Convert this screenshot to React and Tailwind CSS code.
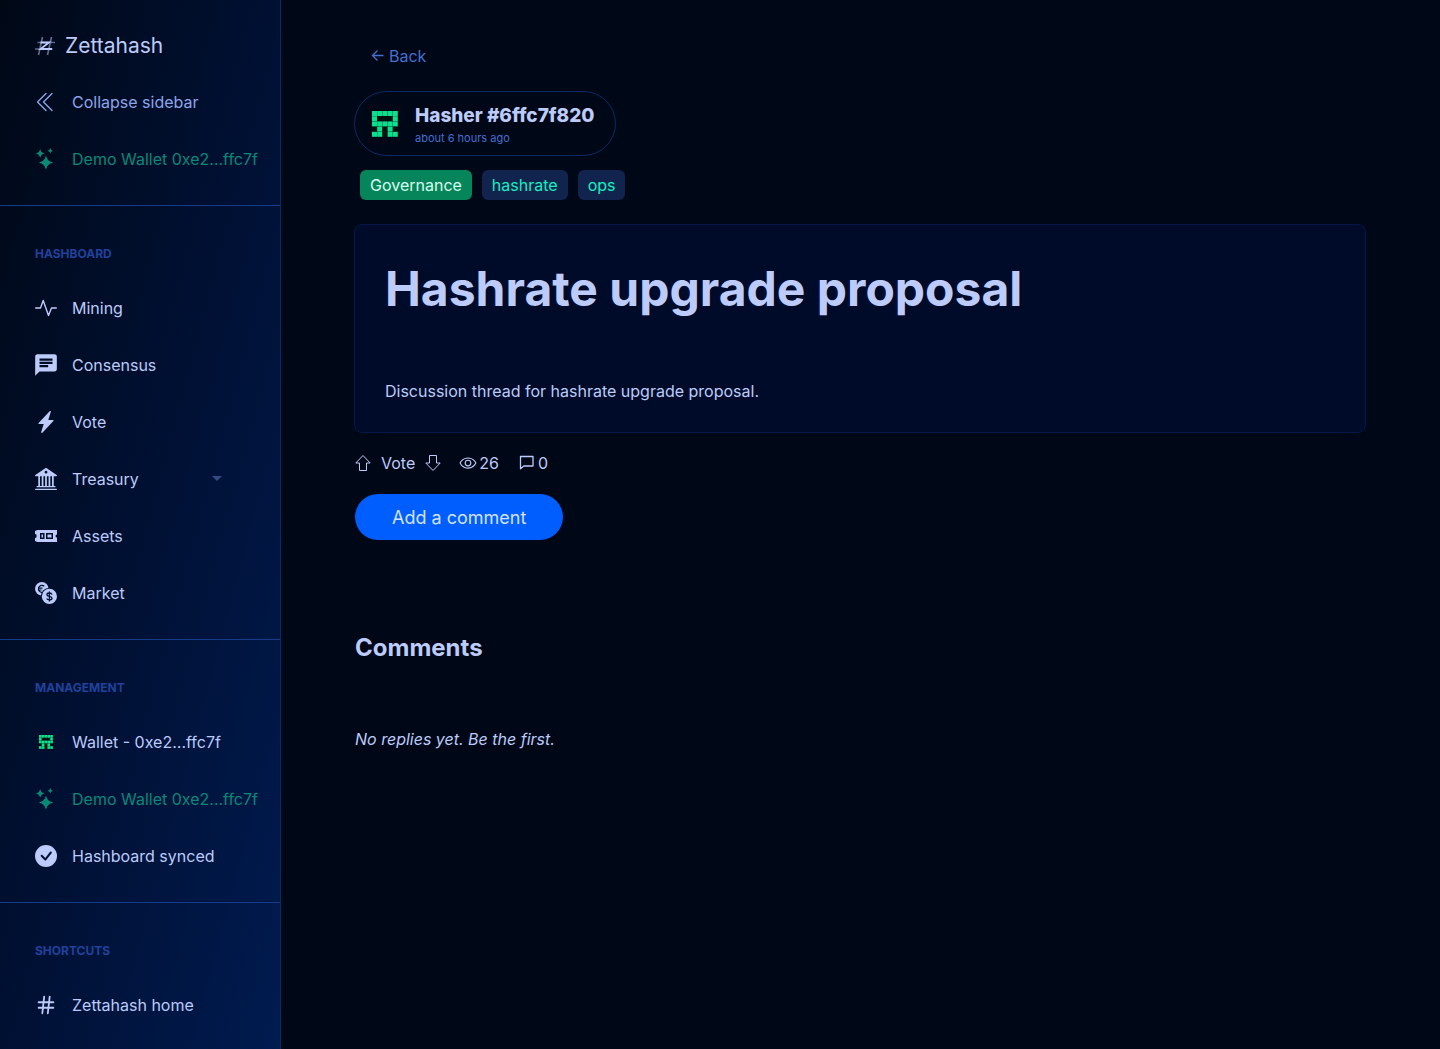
import { BsBank2, BsLightningChargeFill, BsCheckCircleFill } from 'react-icons/bs'
import { MdChat } from 'react-icons/md'
import { FiHash } from 'react-icons/fi'
import { PiEye } from 'react-icons/pi'

const CELLS = ['11111', '10001', '11111', '01010', '11011']

function Identicon({ className }) {
  return (
    <svg viewBox="0 0 25 25" className={className} aria-hidden="true">
      <rect width="25" height="25" fill="#02100f" />
      {CELLS.flatMap((row, y) =>
        [...row].map((c, x) =>
          c === '1' ? <rect key={`${x}-${y}`} x={x * 5} y={y * 5} width="4.8" height="4.8" fill="#0be08f" /> : null,
        ),
      )}
    </svg>
  )
}

function Sparkles({ className }) {
  return (
    <svg viewBox="0 0 22 22" className={className} fill="currentColor" aria-hidden="true">
      <path d="M11 7.500c1.300 4.200 2.800 5.900 7.300 7.100-4.500 1.200-6 2.900-7.300 7.100-1.300-4.200-2.800-5.900-7.300-7.100C8.200 13.400 9.700 11.700 11 7.500Z" />
      <path d="M5.200 1c.7 2.800 1.600 3.700 4.400 4.400C6.800 6.100 5.900 7 5.200 9.800 4.500 7 3.600 6.100.8 5.400 3.600 4.700 4.500 3.800 5.200 1Z" />
      <path d="M15.300 0c.5 1.700 1.100 2.300 2.800 2.800-1.700.5-2.300 1.100-2.800 2.800-.5-1.700-1.100-2.300-2.800-2.800 1.700-.5 2.300-1.100 2.800-2.800Z" />
    </svg>
  )
}

function Collapse({ className }) {
  return (
    <svg viewBox="0 0 22 22" className={className} fill="none" stroke="currentColor" strokeWidth="1.400" strokeLinecap="round" strokeLinejoin="round" aria-hidden="true">
      <path d="M11 2.500 2.500 11l8.500 8.500M17 2.500 8.500 11l8.500 8.500" />
    </svg>
  )
}

function Pulse({ className }) {
  return (
    <svg viewBox="0 0 22 22" className={className} fill="none" stroke="currentColor" strokeWidth="1.400" strokeLinecap="round" strokeLinejoin="round" aria-hidden="true">
      <path d="M.7 11h4.800L8.200 3.500l5.300 15 3-7.500h4.800" />
    </svg>
  )
}

function Cash({ className }) {
  return (
    <svg viewBox="0 0 22 22" className={className} aria-hidden="true">
      <path fill="currentColor" fillRule="evenodd" d="M2.500 5H22v4.500a1.500 1.500 0 0 0 0 3V17H2.500L0 16v-3l1.500-.5v-3L0 9V6ZM5 8v6h4.500V8Zm6 0v6h7V8ZM6.500 9.500H8v3H6.500Zm6 0h4v3h-4Z" />
    </svg>
  )
}

function Coins({ className }) {
  return (
    <svg viewBox="0 0 22 22" className={className} fill="none" aria-hidden="true">
      <circle cx="6.800" cy="6.800" r="6.800" fill="currentColor" />
      <path d="M9.300 4.200A3.500 3.500 0 1 0 7 10.300M3 6.200h4.500M3 8h3.500" stroke="#01102f" strokeWidth="1.200" />
      <circle cx="14.400" cy="14.400" r="8.600" fill="#01102f" />
      <circle cx="14.400" cy="14.400" r="7.600" fill="currentColor" />
      <path d="M17 12.400c-.4-1-1.300-1.400-2.600-1.400-1.500 0-2.500.7-2.500 1.700 0 2.300 5.100 1.200 5.100 3.500 0 1-1 1.700-2.600 1.700-1.400 0-2.300-.5-2.700-1.400M14.400 9.500v10" stroke="#01102f" strokeWidth="1.300" />
    </svg>
  )
}

function LogoMark({ className }) {
  return (
    <svg viewBox="0 0 20 20" className={className} fill="none" stroke="currentColor" aria-hidden="true">
      <path d="M7.500 1 3.500 19M16.500 1l-4 18M2.500 6.500H20M0 13h17.500" strokeWidth="1.700" opacity=".5" />
      <path d="M5.500 6.500h8.500L5.500 13H17" strokeWidth="1.800" />
    </svg>
  )
}

function VoteArrow({ className }) {
  return (
    <svg viewBox="0 0 16 18" className={className} fill="none" stroke="currentColor" strokeLinejoin="round" aria-hidden="true">
      <path d="M8 1.500.8 9H4.500v7.500h7V9h3.700Z" />
    </svg>
  )
}

function Bubble({ className }) {
  return (
    <svg viewBox="0 0 16 16" className={className} fill="none" stroke="currentColor" strokeWidth="1.300" strokeLinejoin="round" aria-hidden="true">
      <path d="M1.500 1.500h12.500v9.500H4.800L1.500 13.800Z" />
    </svg>
  )
}

function Item({ icon, children, className = 'text-[#bccbfa]', as: Tag = 'a', trailing }) {
  const props = Tag === 'a' ? { href: '#' } : { type: 'button' }
  return (
    <li>
      <Tag {...props} className={`flex h-[57px] w-full items-center pl-[35px] text-left ${className}`}>
        <span className="flex w-[22px] shrink-0 justify-center">{icon}</span>
        <span className="ml-[15px] whitespace-nowrap">{children}</span>
        {trailing}
      </Tag>
    </li>
  )
}

function Section({ title, children }) {
  return (
    <section className="border-b border-[#153c8b] pb-[18px] last:border-b-0">
      <h2 className="pt-[38px] pb-[15px] pl-[35px] text-xs leading-5 font-bold text-[#20429c] uppercase">{title}</h2>
      <ul>{children}</ul>
    </section>
  )
}

function Sidebar() {
  return (
    <nav className="w-[281px] shrink-0 overflow-hidden border-r border-[#0b2a63] bg-linear-to-br from-[#000816] via-[#001033] to-[#001b50]">
      <ul className="border-b border-[#153c8b] pt-4 pb-[18px]">
        <li>
          <a href="#" className="flex h-[57px] items-center gap-2.5 pt-0.5 pl-[35px] text-[#bccbfa]">
            <LogoMark className="size-5" />
            <span className="text-[21px]">Zettahash</span>
          </a>
        </li>
        <Item as="button" className="text-[#8ca5ec]" icon={<Collapse className="size-[22px]" />}>Collapse sidebar</Item>
        <Item className="text-[#0a8878]" icon={<Sparkles className="size-[22px]" />}>Demo Wallet 0xe2...ffc7f</Item>
      </ul>
      <Section title="Hashboard">
        <Item icon={<Pulse className="size-[22px]" />}>Mining</Item>
        <Item icon={<MdChat className="size-[26px] shrink-0" />}>Consensus</Item>
        <Item icon={<BsLightningChargeFill className="size-[22px]" />}>Vote</Item>
        <Item
          as="button"
          icon={<BsBank2 className="size-[22px]" />}
          trailing={
            <svg viewBox="0 0 10 5" className="mr-[58px] ml-auto h-[5px] w-2.5" fill="#344a80" aria-hidden="true">
              <path d="M0 0h10L5 5Z" />
            </svg>
          }
        >
          Treasury
        </Item>
        <Item icon={<Cash className="size-[22px]" />}>Assets</Item>
        <Item icon={<Coins className="size-[22px]" />}>Market</Item>
      </Section>
      <Section title="Management">
        <Item icon={<Identicon className="size-3.5" />}>Wallet - 0xe2...ffc7f</Item>
        <Item className="text-[#0a8878]" icon={<Sparkles className="size-[22px]" />}>Demo Wallet 0xe2...ffc7f</Item>
        <Item icon={<BsCheckCircleFill className="size-[22px]" />}>Hashboard synced</Item>
      </Section>
      <Section title="Shortcuts">
        <Item icon={<FiHash className="size-[22px]" />}>Zettahash home</Item>
      </Section>
    </nav>
  )
}

export default function App() {
  return (
    <div className="flex h-screen overflow-hidden bg-[#000717] font-['Inter',sans-serif] text-base text-[#bccbfa]">
      <Sidebar />
      <main className="flex min-w-0 flex-1 flex-col items-start overflow-hidden pt-11 pr-[74px] pl-[73px]">
        <a href="#" className="ml-[17px] flex items-center gap-1 leading-6 text-[#456fd0]">
          <svg viewBox="0 0 14 14" className="size-3.5" fill="none" stroke="currentColor" strokeWidth="1.300" aria-hidden="true">
            <path d="M12.500 6.500h-11M6.500 1.500l-5 5 5 5" />
          </svg>
          Back
        </a>

        <a href="#" className="mt-[23px] flex h-[65px] items-center gap-[17px] rounded-full border border-[#0d2a66] pr-[21px] pl-[17px]">
          <Identicon className="size-[26px]" />
          <span className="pt-1">
            <span className="block text-[19px] leading-6 font-extrabold">Hasher #6ffc7f820</span>
            <span className="block text-[11px] leading-5 text-[#456fd0]">about 6 hours ago</span>
          </span>
        </a>

        <ul className="mt-3.5 ml-1.5 flex gap-2.5 leading-[30px]">
          <li className="rounded-md bg-[#07855a] px-2.5 text-[#d5fff0]">Governance</li>
          <li className="rounded-md bg-[#10244e] px-2.5 text-[#15f0c0]">hashrate</li>
          <li className="rounded-md bg-[#10244e] px-2.5 text-[#15f0c0]">ops</li>
        </ul>

        <article className="mt-6 w-full rounded-lg border border-[#06174a] bg-[#000b29] px-[30px] pt-7 pb-[29px]">
          <h1 className="text-5xl leading-[72px] font-bold">Hashrate upgrade proposal</h1>
          <p className="mt-[54px] leading-6">Discussion thread for hashrate upgrade proposal.</p>
        </article>

        <div className="mt-[18px] ml-px flex items-center leading-6">
          <button type="button" aria-label="Vote up"><VoteArrow className="h-[18px] w-4" /></button>
          <span className="ml-2.5">Vote</span>
          <button type="button" aria-label="Vote down" className="ml-2.5"><VoteArrow className="h-[18px] w-4 rotate-180" /></button>
          <span className="ml-[18px] flex items-center gap-0.5"><PiEye className="size-[18px]" />26</span>
          <span className="ml-5 flex items-center gap-[3px]"><Bubble className="size-4" />0</span>
        </div>

        <button type="button" className="mt-[19px] ml-px h-[46px] rounded-full bg-[#005eff] px-[37px] pt-px text-lg text-[#d3e2ff]">Add a comment</button>

        <h2 className="mt-[90px] ml-px text-2xl leading-9 font-bold">Comments</h2>
        <p className="mt-[61px] ml-px leading-6 italic">No replies yet. Be the first.</p>
      </main>
    </div>
  )
}
